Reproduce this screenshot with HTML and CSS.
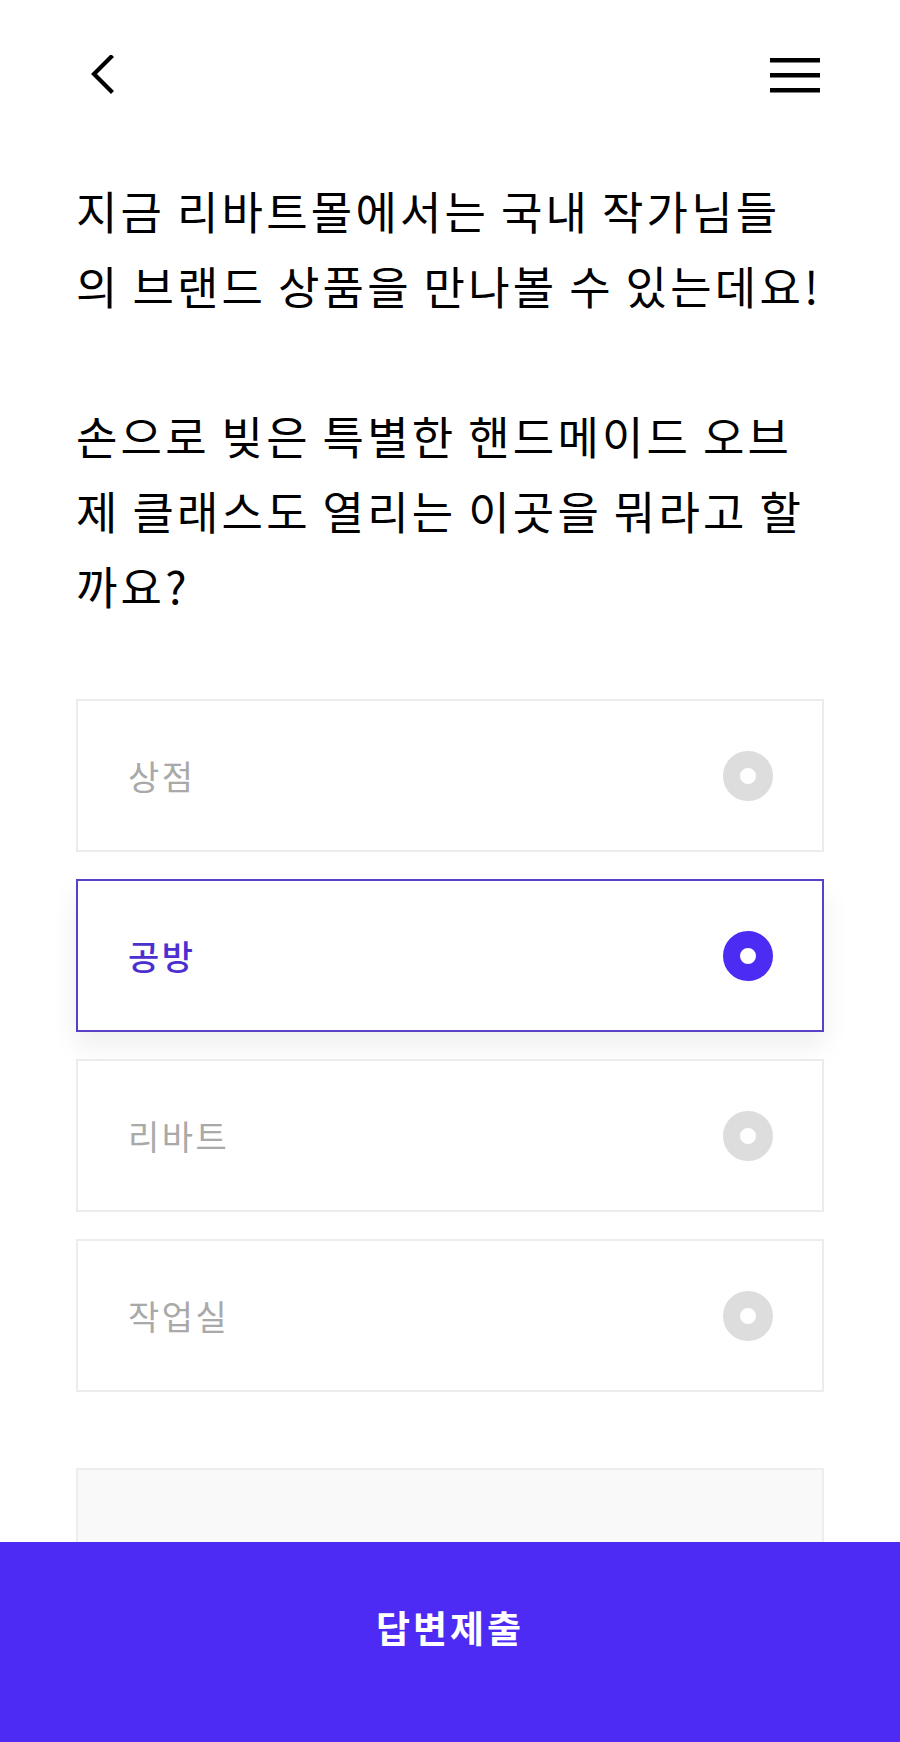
FILE: index.html
```html
<!DOCTYPE html>
<html lang="ko">
<head>
<meta charset="utf-8">
<title>질문</title>
<link rel="stylesheet" href="styles.css">
</head>
<body>
<div class="page">
  <header class="topbar">
    <button class="icon-btn back" aria-label="뒤로">
      <svg width="24" height="40" viewBox="0 0 24 40"><polyline points="21,2 4,19 21,36" fill="none" stroke="#000" stroke-width="4.2" stroke-linecap="square" stroke-linejoin="miter"/></svg>
    </button>
    <button class="icon-btn menu" aria-label="메뉴">
      <svg width="50" height="40" viewBox="0 0 50 40"><rect x="0" y="3" width="50" height="4.5" fill="#000"/><rect x="0" y="18" width="50" height="4.5" fill="#000"/><rect x="0" y="33" width="50" height="4.5" fill="#000"/></svg>
    </button>
  </header>

  <p class="question">지금 리바트몰에서는 국내 작가님들<br>의 브랜드 상품을 만나볼 수 있는데요!<br><br>손으로 빚은 특별한 핸드메이드 오브<br>제 클래스도 열리는 이곳을 뭐라고 할<br>까요?</p>

  <ul class="options">
    <li class="option"><span class="label">상점</span><span class="radio"></span></li>
    <li class="option selected"><span class="label">공방</span><span class="radio"></span></li>
    <li class="option"><span class="label">리바트</span><span class="radio"></span></li>
    <li class="option"><span class="label">작업실</span><span class="radio"></span></li>
  </ul>

  <div class="answer-box"></div>
</div>

<button class="submit">답변제출</button>
</body>
</html>
```

FILE: styles.css
```css
* { box-sizing: border-box; }
html, body {
  margin: 0;
  padding: 0;
  background: #ffffff;
}
body {
  font-family: "Noto Sans CJK KR", "Noto Sans", sans-serif;
  color: #000;
}
.page {
  width: 900px;
  height: 1742px;
  overflow: hidden;
}
.topbar {
  height: 150px;
  display: flex;
  align-items: center;
  justify-content: space-between;
  padding: 0 80px 0 90px;
}
.icon-btn {
  background: none;
  border: 0;
  padding: 0;
  display: flex;
}
.question {
  margin: 23px 0 0;
  padding: 0 0 0 76px;
  font-size: 45px;
  line-height: 75px;
  letter-spacing: 3.2px;
  word-spacing: -4px;
  white-space: nowrap;
  font-weight: 400;
}
.options {
  list-style: none;
  margin: 76px 76px 0;
  padding: 0;
  display: flex;
  flex-direction: column;
  gap: 27px;
}
.option {
  height: 153px;
  border: 2px solid #ececec;
  background: #fff;
  display: flex;
  align-items: center;
  justify-content: space-between;
  padding: 0 49px 0 50px;
}
.label {
  font-size: 34px;
  letter-spacing: 2.5px;
  color: #a9a9a9;
}
.radio {
  width: 50px;
  height: 50px;
  border-radius: 50%;
  border: 17px solid #dddddd;
  background: #fff;
}
.option.selected {
  border-color: #5a3fc8;
  box-shadow: 0 14px 26px rgba(0, 0, 0, 0.07);
}
.option.selected .label {
  color: #4b30cf;
  font-weight: 500;
}
.option.selected .radio {
  border-color: #4c2cf2;
}
.answer-box {
  margin: 76px 76px 0;
  height: 220px;
  border: 2px solid #eeeeee;
  background: #f9f9f9;
}
.submit {
  position: fixed;
  left: 0;
  bottom: 0;
  width: 900px;
  height: 200px;
  border: 0;
  margin: 0;
  padding: 0 0 30px;
  display: block;
  text-align: center;
  background: #4d2bf4;
  color: #fff;
  font-family: "Noto Sans CJK KR", sans-serif;
  font-size: 37px;
  font-weight: 700;
  letter-spacing: 3px;
  line-height: 50px;
}
```
